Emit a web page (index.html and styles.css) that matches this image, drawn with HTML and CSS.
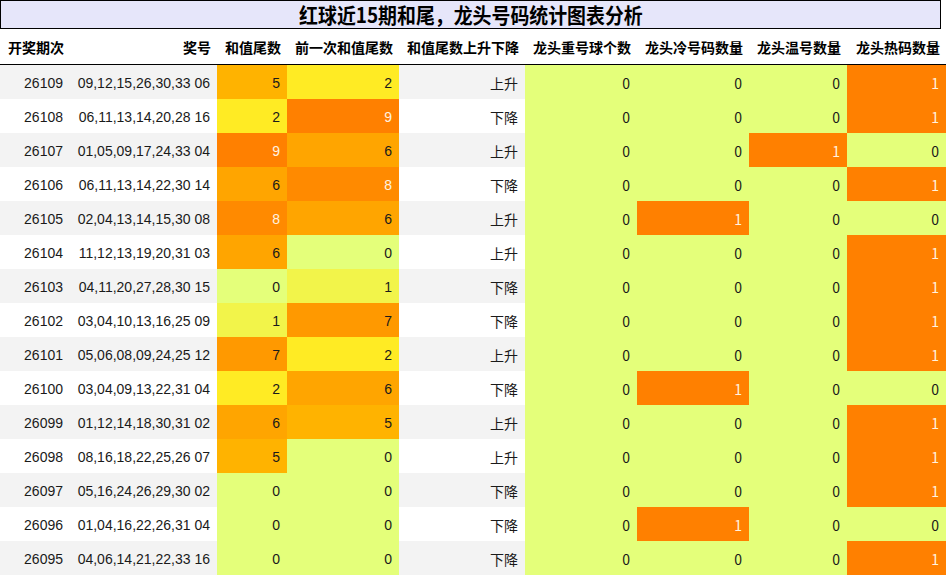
FILE: index.html
```html
<!DOCTYPE html>
<html lang="zh">
<head>
<meta charset="utf-8">
<title>红球近15期和尾，龙头号码统计图表分析</title>
<link rel="stylesheet" href="styles.css">
</head>
<body>
<div class="page">
  <div class="title"><span class="title-text">红球近15期和尾，龙头号码统计图表分析</span></div>
  <div class="row head">
    <div class="c left">开奖期次</div>
    <div class="c">奖号</div>
    <div class="c">和值尾数</div>
    <div class="c">前一次和值尾数</div>
    <div class="c">和值尾数上升下降</div>
    <div class="c">龙头重号球个数</div>
    <div class="c">龙头冷号码数量</div>
    <div class="c">龙头温号数量</div>
    <div class="c">龙头热码数量</div>
  </div>
  <div id="body"></div>
</div>
<script src="app.js"></script>
</body>
</html>
```

FILE: app.js
```js
const data = [
  ["26109","09,12,15,26,30,33 06",5,2,"上升",0,0,0,1],
  ["26108","06,11,13,14,20,28 16",2,9,"下降",0,0,0,1],
  ["26107","01,05,09,17,24,33 04",9,6,"上升",0,0,1,0],
  ["26106","06,11,13,14,22,30 14",6,8,"下降",0,0,0,1],
  ["26105","02,04,13,14,15,30 08",8,6,"上升",0,1,0,0],
  ["26104","11,12,13,19,20,31 03",6,0,"上升",0,0,0,1],
  ["26103","04,11,20,27,28,30 15",0,1,"下降",0,0,0,1],
  ["26102","03,04,10,13,16,25 09",1,7,"下降",0,0,0,1],
  ["26101","05,06,08,09,24,25 12",7,2,"上升",0,0,0,1],
  ["26100","03,04,09,13,22,31 04",2,6,"下降",0,1,0,0],
  ["26099","01,12,14,18,30,31 02",6,5,"上升",0,0,0,1],
  ["26098","08,16,18,22,25,26 07",5,0,"上升",0,0,0,1],
  ["26097","05,16,24,26,29,30 02",0,0,"下降",0,0,0,1],
  ["26096","01,04,16,22,26,31 04",0,0,"下降",0,1,0,0],
  ["26095","04,06,14,21,22,33 16",0,0,"下降",0,0,0,1]
];
const body = document.getElementById("body");
data.forEach((r, i) => {
  const row = document.createElement("div");
  row.className = "row body-row" + (i % 2 === 0 ? " alt" : "");
  const cells = [
    ["c plain", r[0]],
    ["c plain", r[1]],
    ["c v" + r[2], r[2]],
    ["c v" + r[3], r[3]],
    ["c plain", r[4]],
    ["c n " + (r[5] ? "hot" : "v0"), r[5]],
    ["c n " + (r[6] ? "hot" : "v0"), r[6]],
    ["c n " + (r[7] ? "hot" : "v0"), r[7]],
    ["c n " + (r[8] ? "hot" : "v0"), r[8]]
  ];
  cells.forEach(([cls, txt]) => {
    const d = document.createElement("div");
    d.className = cls;
    d.textContent = txt;
    row.appendChild(d);
  });
  body.appendChild(row);
});
```

FILE: styles.css
```css
html, body {
  margin: 0;
  padding: 0;
  background: #fff;
}
body {
  width: 946px;
  height: 576px;
  overflow: hidden;
  font-family: "Liberation Sans", "Noto Sans CJK SC", sans-serif;
  color: #1a1a1a;
}
.page {
  width: 946px;
}
.title {
  box-sizing: border-box;
  width: 941px;
  height: 29px;
  border: 1px solid #000;
  background: #e6e6fa;
  font-family: "Noto Sans CJK SC", sans-serif;
  font-weight: 700;
  font-size: 21px;
  line-height: 26px;
  text-align: center;
  color: #000;
}
.title-text {
  display: inline-block;
  transform: scaleX(0.9);
}
.row {
  display: grid;
  grid-template-columns: 70px 147px 70px 112px 126px 112px 112px 98px 99px;
}
.head {
  box-sizing: border-box;
  height: 36px;
  border-bottom: 1px solid #000;
  font-family: "Noto Sans CJK SC", sans-serif;
  font-weight: 700;
  font-size: 14px;
  color: #000;
}
.c {
  display: flex;
  align-items: center;
  justify-content: flex-end;
  padding: 0 7px;
  white-space: nowrap;
}
.head .c {
  padding: 0 6px;
}
.head .left {
  justify-content: flex-start;
  padding-left: 8px;
}
.body-row {
  height: 34px;
  font-size: 14px;
}
.body-row .c {
  padding-top: 1px;
}
.alt .plain {
  background: #f3f3f3;
}
.n {
  font-family: "Noto Sans CJK SC", sans-serif;
}
.v0 { background: #e4ff7a; }
.v1 { background: #f2f44a; }
.v2 { background: #ffeb24; }
.v5 { background: #ffb300; }
.v6 { background: #ffa500; }
.v7 { background: #ff9900; }
.v8 { background: #ff8a00; color: #fff3e0; }
.v9 { background: #ff8000; color: #fff3e0; }
.hot { background: #ff8000; color: #fff3e0; }
```
